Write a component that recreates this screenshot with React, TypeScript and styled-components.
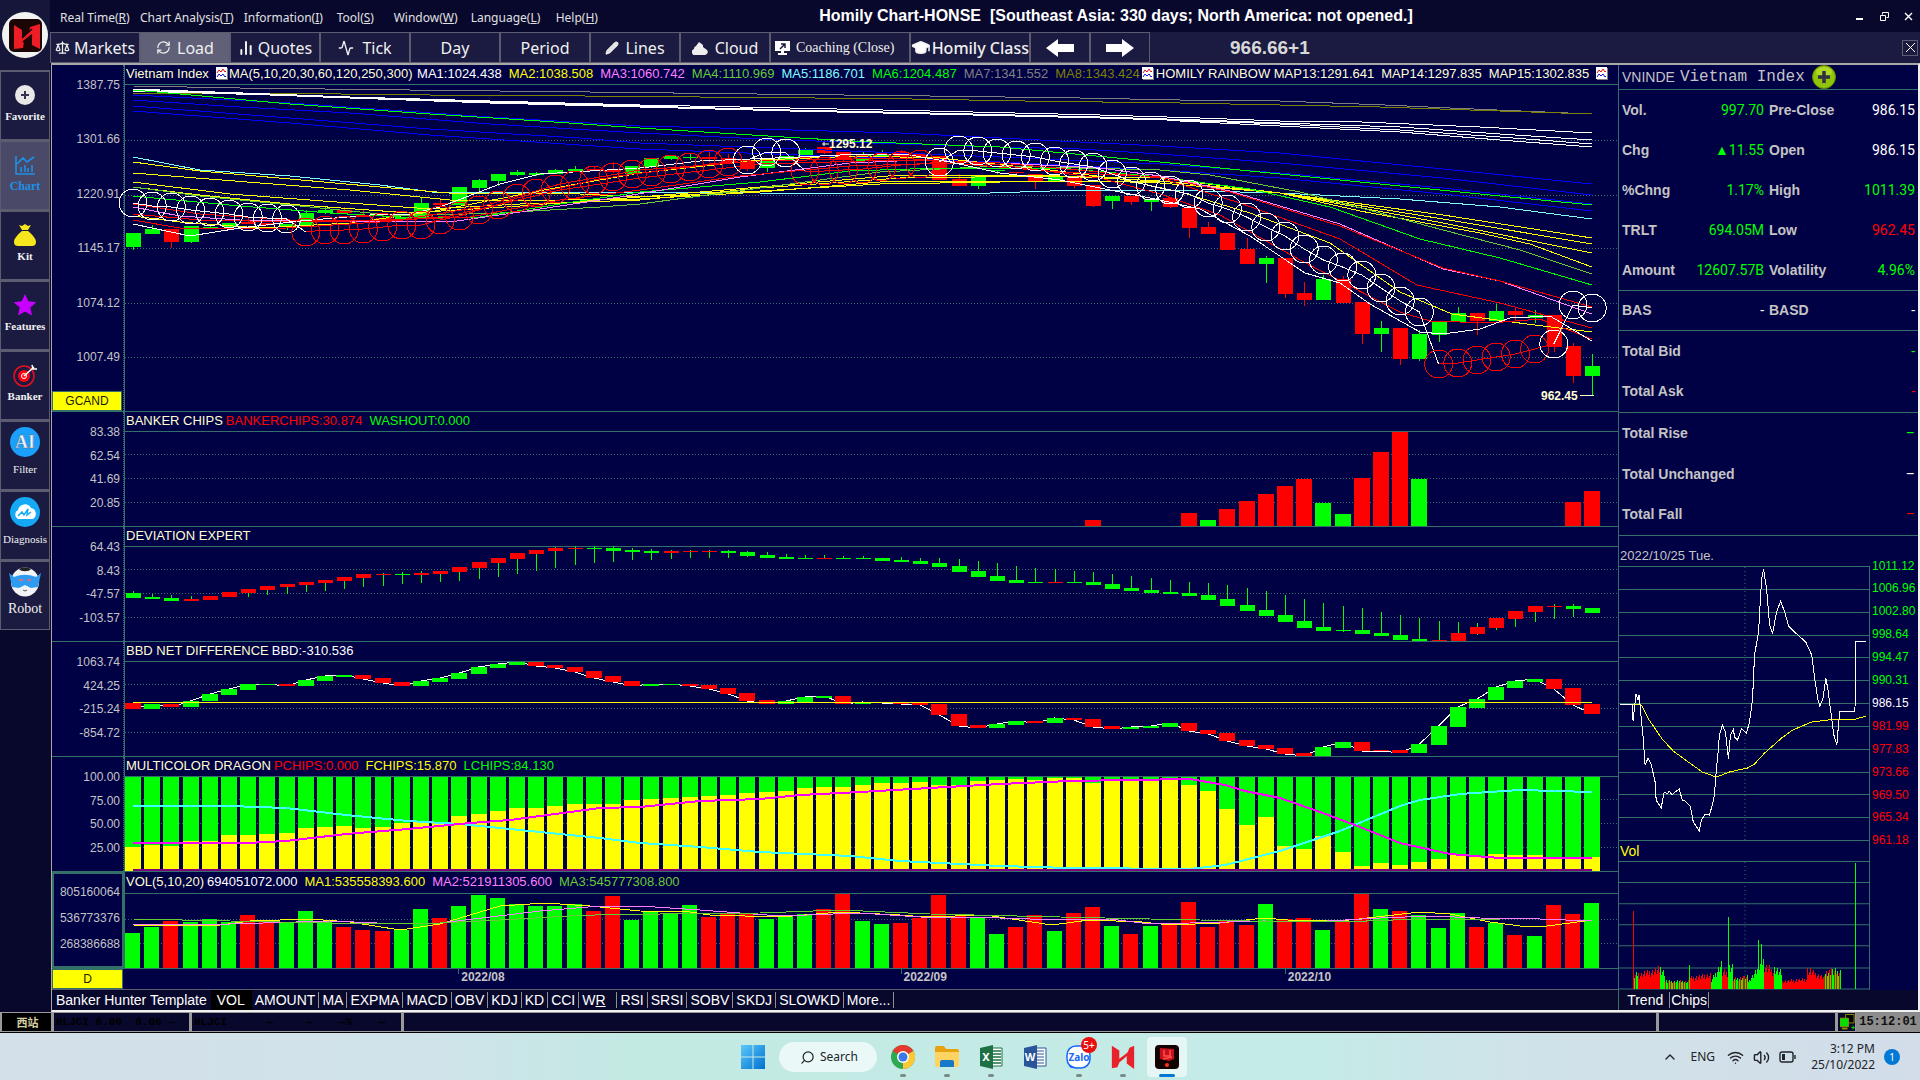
import React from "react";
import styled, { createGlobalStyle, css } from "styled-components";
import { Scale, RefreshCw, Activity, Pencil, GraduationCap, Wifi, Volume2, ChevronUp, Search as SearchIcon, ChartNoAxesColumn } from "lucide-react";

const C = {
  navy: "#000045",
  ink: "#08082d",
  bar: "#1b1b41",
  edge: "#5c5c70",
  teal: "#34706a",
  green: "#00ff00",
  red: "#ff0000",
  yellow: "#ffff00",
  text: "#c4c4c4",
  cream: "#ffffd0",
  pink: "#ff80ff",
  cyan: "#80ffff",
  olive: "#808000",
  leaf: "#66cc33",
  grey: "#808080",
  blue: "#0000ff",
  white: "#ffffff",
};

const Global = createGlobalStyle`
  *, *::before, *::after { box-sizing: border-box; }
  body { margin: 0; background: ${C.ink}; font-family: "Liberation Sans", Arial, sans-serif; }
  button { font: inherit; color: inherit; background: none; border: 0; padding: 0; margin: 0; cursor: pointer; }
`;

/* ---------- frame ---------- */

const Screen = styled.div`
  display: flex;
  flex-direction: column;
  min-height: 100vh;
  overflow: hidden;
`;
const Body = styled.div`
  flex: 1;
  display: flex;
`;
const Rail = styled.nav`
  width: 50px;
  flex: none;
  display: flex;
  flex-direction: column;
  background: ${C.ink};
`;
const LogoBox = styled.div`
  height: 70px;
  display: grid;
  place-items: center;
  background: #16163a;
`;
const RailButton = styled.button<{ $on?: boolean; $size?: number; $bold?: boolean; $large?: boolean }>`
  height: 70px;
  width: 50px;
  border: 1px solid ${C.edge};
  border-top-width: 2px;
  background: ${(p) => (p.$on ? "#4a4a68" : C.bar)};
  color: ${(p) => (p.$on ? "#1e90e6" : "#f0f0f0")};
  font-family: "Liberation Serif", serif;
  font-size: ${(p) => p.$size ?? 11}px;
  font-weight: ${(p) => (p.$bold ? 700 : 400)};
  line-height: 16px;
  display: flex;
  flex-direction: column;
  align-items: center;
  justify-content: center;
  gap: ${(p) => (p.$large ? 4 : 1)}px;
  padding-bottom: ${(p) => (p.$large ? 8 : 4)}px;
  white-space: nowrap;
`;
const Window = styled.div`
  flex: 1;
  min-width: 0;
  display: flex;
  flex-direction: column;
`;
const TitleRow = styled.header`
  height: 32px;
  display: flex;
  align-items: center;
  background: ${C.ink};
  color: #e0e0e0;
`;
const MenuBar = styled.div`
  flex: 1 1 268px;
  display: flex;
  gap: 10px;
  padding: 3px 0 0 10px;
  font: 12px/16px "Noto Sans", sans-serif;
`;
const MenuButton = styled.button<{ $w: number }>`
  min-width: ${(p) => p.$w}px;
  text-align: left;
  white-space: nowrap;
`;
const Title = styled.h1`
  margin: 0;
  font-size: 16px;
  line-height: 20px;
  color: #fff;
  white-space: pre;
`;
const WindowButtons = styled.div`
  flex: 1 1 0;
  display: flex;
  justify-content: flex-end;
  gap: 12px;
  padding-right: 6px;
`;
const SmallButton = styled.button<{ $boxed?: boolean }>`
  width: ${(p) => (p.$boxed ? 16 : 12)}px;
  height: 16px;
  display: grid;
  place-items: center;
  ${(p) => p.$boxed && css`border: 1px solid ${C.edge};`}
`;
const ToolRow = styled.div`
  height: 31px;
  display: flex;
  align-items: center;
  background: ${C.bar};
  color: #f0f0f0;
  padding-right: 2px;
`;
const ToolButton = styled.button<{ $w: number; $on?: boolean; $gap?: number; $font?: string; $left?: boolean }>`
  width: ${(p) => p.$w}px;
  height: 31px;
  border: 1px solid ${C.edge};
  background: ${(p) => (p.$on ? "#606078" : C.bar)};
  font: ${(p) => p.$font ?? '16px/20px "Noto Sans", sans-serif'};
  display: flex;
  align-items: center;
  justify-content: ${(p) => (p.$left ? "flex-start" : "center")};
  padding-left: ${(p) => (p.$left ? 4 : 0)}px;
  gap: ${(p) => p.$gap ?? 4}px;
  white-space: nowrap;
`;
const Quote = styled.output`
  margin-left: 80px;
  flex: 1;
  font-weight: 700;
  font-size: 19px;
  color: #d8d8d8;
`;
const Work = styled.div`
  flex: 1;
  display: flex;
  margin-left: 1px;
  border: 2px solid #f0f0f0;
  border-left: 1px solid #a8a8a8;
  border-top-color: #a8a8a8;
  background: ${C.navy};
`;
const Charts = styled.main`
  flex: 1;
  min-width: 0;
  display: flex;
  flex-direction: column;
`;

/* ---------- chart panels ---------- */

const Panel = styled.section<{ $h: number; $grow?: boolean }>`
  display: grid;
  grid-template-columns: 72px minmax(0, 1fr);
  height: ${(p) => p.$h}px;
  ${(p) => p.$grow && css`flex: 1 0 auto;`}
  border-bottom: 1px solid ${C.teal};
`;
const Axis = styled.div<{ $pad: number; $boxed?: boolean }>`
  display: flex;
  flex-direction: column;
  padding: 12px 0 ${(p) => p.$pad}px;
  border-right: 1px dotted ${C.teal};
  ${(p) => p.$boxed && css`outline: 2px solid ${C.teal}; outline-offset: -2px;`}
`;
const Ticks = styled.div`
  flex: 1;
  display: flex;
  flex-direction: column;
  justify-content: space-between;
  text-align: right;
  padding-right: 3px;
  color: ${C.text};
  font-size: 12px;
  line-height: 16px;
`;
const YellowButton = styled.button`
  height: 20px;
  margin-right: 1px;
  background: ${C.yellow};
  border: 1px solid ${C.teal};
  color: #202000;
  font-size: 12px;
`;
const GapTick = styled.div`
  height: 26px;
`;
const Plot = styled.div`
  display: flex;
  flex-direction: column;
  min-width: 0;
  border-left: 1px solid ${C.teal};
`;
const Legend = styled.div<{ $tall?: boolean }>`
  height: ${(p) => (p.$tall ? 22 : 20)}px;
  display: flex;
  align-items: center;
  gap: 7px;
  padding: 0 0 2px 1px;
  border-bottom: 1px solid ${C.teal};
  font-size: 13px;
  line-height: 16px;
  white-space: nowrap;
  color: ${C.cream};
`;
const Tag = styled.span<{ $c?: string }>`
  color: ${(p) => p.$c ?? C.cream};
`;
const Pair = styled.span<{ $gap?: number }>`
  display: inline-flex;
  align-items: center;
  gap: ${(p) => p.$gap ?? 3}px;
`;
const Canvas = styled.svg`
  display: block;
  width: 100%;
  flex: 1;
  min-height: 0;
  overflow: visible;
`;
const DateRow = styled.div`
  display: grid;
  grid-template-columns: 72px minmax(0, 1fr);
  height: 21px;
  border-bottom: 1px solid ${C.edge};
`;
const Dates = styled.div`
  display: grid;
  grid-template-columns: 334fr 442fr 384fr 333fr;
  font-size: 12px;
  font-weight: 700;
  line-height: 17px;
  color: ${C.text};
`;
const DateMark = styled.span<{ $tick?: boolean }>`
  padding-left: 2px;
  height: 5px;
  ${(p) => p.$tick && css`border-left: 1px solid ${C.teal};`}
`;
const TabRow = styled.div`
  height: 20px;
  display: flex;
  align-items: center;
  background: ${C.ink};
  color: #fff;
  font-size: 14px;
  line-height: 16px;
  padding-left: 1px;
`;
const Tab = styled.button<{ $on?: boolean; $bare?: boolean; $pad?: number }>`
  padding: 0 ${(p) => p.$pad ?? 3}px;
  white-space: nowrap;
  border-right: 1px solid ${(p) => (p.$bare ? "transparent" : "#909090")};
  ${(p) => p.$on && css`background: #000; line-height: 20px;`}
`;

/* ---------- quote column ---------- */

const Aside = styled.aside`
  width: 300px;
  flex: none;
  border-left: 1px solid ${C.teal};
  display: flex;
  flex-direction: column;
`;
const SymbolRow = styled.div`
  height: 25px;
  display: flex;
  align-items: center;
  gap: 5px;
  padding-left: 3px;
  border-bottom: 1px solid ${C.teal};
  color: ${C.text};
  font-size: 14px;
`;
const SymbolName = styled.span`
  font: 16px/20px "Liberation Mono", monospace;
  white-space: nowrap;
`;
const Facts = styled.table`
  width: 100%;
  border-collapse: collapse;
  table-layout: fixed;
  tbody { border-bottom: 1px solid ${C.teal}; }
  th, td { padding: 0 3px; white-space: nowrap; }
  th { text-align: left; font-size: 14px; color: ${C.text}; padding-right: 0; }
  td + th { padding-left: 2px; }
`;
const FactRow = styled.tr<{ $h?: number }>`
  height: ${(p) => p.$h ?? 40}px;
`;
const Val = styled.td<{ $c: string }>`
  text-align: right;
  font-family: Roboto, sans-serif;
  font-size: 14px;
  color: ${(p) => p.$c};
`;
const Intraday = styled.div`
  flex: 1;
  display: grid;
  grid-template-columns: minmax(0, 1fr) 48px;
`;
const IntraCol = styled.div`
  display: flex;
  flex-direction: column;
`;
const Caption = styled.div<{ $h: number; $c?: string }>`
  height: ${(p) => p.$h}px;
  padding-left: 1px;
  display: flex;
  align-items: flex-end;
  font-size: ${(p) => (p.$c ? 14 : 13)}px;
  line-height: 20px;
  color: ${(p) => p.$c ?? C.text};
  border-right: 1px solid ${(p) => (p.$c ? C.teal : "transparent")};
`;
const IntraPrice = styled.svg`
  display: block;
  width: 100%;
  height: 275px;
`;
const IntraTicks = styled.div`
  height: 313px;
  padding: 22px 0 0 2px;
  display: flex;
  flex-direction: column;
  justify-content: space-between;
  font-size: 12px;
  line-height: 16px;
`;

/* ---------- bottom strips ---------- */

const Status = styled.footer`
  height: 21px;
  display: flex;
  background: ${C.ink};
  border-bottom: 1px solid #000;
  color: #000;
  font: 700 11px/18px "Liberation Mono", monospace;
`;
const Cell = styled.div<{ $w?: number; $bg?: string; $c?: string }>`
  ${(p) => (p.$w ? css`width: ${p.$w}px; flex: none;` : css`flex: 1;`)}
  border: 1px solid #9a9a9a;
  border-left-width: 2px;
  background: ${(p) => p.$bg ?? C.ink};
  padding-left: 2px;
  white-space: pre;
  ${(p) => p.$c && css`color: ${p.$c}; text-align: center; font-family: "Noto Sans CJK SC", sans-serif;`}
`;
const Clock = styled.time`
  width: 64px;
  flex: none;
  background: #8c8c8c;
  font: 700 12px/20px "Liberation Mono", monospace;
  text-align: center;
  color: #101010;
`;
const Taskbar = styled.div`
  height: 48px;
  display: flex;
  align-items: center;
  background: linear-gradient(90deg, #d3dfe9 0%, #d0e3ea 22%, #c3e9e3 33%, #c4ebe7 68%, #d0e2e9 80%, #d2dde9 100%);
  font: 12px/16px "Noto Sans", sans-serif;
  color: #202428;
`;
const Grow = styled.div`
  flex: 1 1 0;
  display: flex;
  justify-content: flex-end;
  align-items: center;
  gap: 9px;
  padding-right: 20px;
`;
const Dock = styled.div`
  display: flex;
  align-items: center;
  gap: 4px;
`;
const DockButton = styled.button<{ $on?: boolean; $dot?: boolean }>`
  width: 40px;
  height: 40px;
  border-radius: 4px;
  display: grid;
  place-items: center;
  position: relative;
  ${(p) => p.$on && css`background: #e6f6f5;`}
  ${(p) =>
    (p.$dot || p.$on) &&
    css`
      &::after {
        content: "";
        position: absolute;
        left: 50%;
        bottom: 0;
        width: ${p.$on ? 16 : 6}px;
        height: 3px;
        transform: translateX(-50%);
        border-radius: 2px;
        background: ${p.$on ? "#0078d4" : "#7c8a8c"};
      }
    `}
`;
const Badge = styled.span`
  position: absolute;
  top: 0;
  right: 2px;
  width: 16px;
  height: 16px;
  border-radius: 50%;
  background: #e81010;
  color: #fff;
  font-size: 10px;
  line-height: 16px;
`;
const SearchBox = styled.label`
  width: 98px;
  height: 30px;
  margin: 0 2px;
  border-radius: 15px;
  background: #eaf8f8;
  display: flex;
  align-items: center;
  gap: 5px;
  padding-left: 21px;
  svg { transform: scaleX(-1); }
  input {
    width: 50px;
    border: 0;
    padding: 0;
    background: transparent;
    font: inherit;
  }
  input::placeholder { color: #202428; opacity: 1; }
`;
const DateTime = styled.div`
  text-align: right;
  margin-left: 6px;
`;
const Count = styled.span`
  width: 16px;
  height: 16px;
  border-radius: 50%;
  background: #0078d4;
  color: #fff;
  text-align: center;
  font-size: 10px;
`;

/* ---------- series data ---------- */

const X0 = 133;
const STEP = 19.2;
const cx = (i: number) => X0 + STEP * i;
const hue = (k: string) => (k === "G" ? C.green : C.red);

type Box = { k: string; n: number[] };
const parse = (s: string): Box[] =>
  s.trim().split(/\s+/).map((t) => ({ k: t[0], n: t.slice(1).split(",").map(Number) }));

const CANDLES = parse(`
G233,247,233,250 G229,234,225,234 R229,242,229,248 G226,242,226,243 G227,228,226,229 G223,227,223,227 R222,224,217,224
R223,225,223,226 G224,226,224,230 G213,225,210,225 G210,213,207,214 R210,213,207,213 R215,217,210,217 R218,220,215,220
G217,219,217,220 G203,217,198,217 R203,205,198,207 G187,205,187,205 G180,188,179,192 G174,181,174,186 G172,175,170,176
G173,175,172,176 G170,174,169,174 G169,171,166,171 R169,171,167,171 R170,172,162,173 G166,174,166,174 G158,167,158,168
G156,159,155,160 G157,158,153,160 R157,159,152,162 R158,163,154,163 R160,169,160,171 G160,168,160,172 G156,161,156,161
G150,157,148,157 R147,153,147,154 R152,160,152,161 G155,161,152,161 G154,156,150,157 R152,157,150,157 R154,157,153,158
R156,180,156,180 R179,186,174,186 G175,186,175,189 G170,171,170,174 R172,173,172,175 R174,181,174,189 G177,181,177,181
R177,186,177,188 R185,206,185,207 G196,201,196,209 R196,202,196,205 G199,202,199,211 R198,207,198,208 R208,228,208,238
R227,234,222,234 R233,250,233,250 R249,264,238,264 G258,264,256,283 R258,294,258,298 R293,300,282,306 G279,300,275,300
R279,303,276,303 R302,334,302,344 G328,334,321,352 R328,359,328,365 G334,359,330,361 G321,335,321,342 G313,322,307,322
R313,321,313,335 G311,321,304,321 R311,315,308,320 G315,318,310,323 R315,347,315,352 R346,376,343,383 G366,376,354,396`);

const RINGS = parse(`
W203 W206 W207 W210 W212 W214 W217 W218 W219 R232 R230 R230 R229 R227 R225 R225 R220 R216 R210 R205 R198 R193 R189 R185
R180 R177 R174 R172 R169 R167 R164 R162 W160 W152 W153 R171 R171 R170 R169 R167 R165 R164 W162 W150 W151 W153 W155 W157
W161 W164 W167 W174 W181 W186 W190 W194 W203 W209 W217 W227 W236 W249 W260 W267 W275 W288 W301 W312 R364 R363 R360 R357
R354 R349 W344 W305 W308`);

const CHIPS: [number, string, number][] = [
  [50, "R", 520], [55, "R", 513], [56, "G", 520], [57, "R", 509], [58, "R", 501], [59, "R", 494], [60, "R", 486],
  [61, "R", 479], [62, "G", 503], [63, "G", 514], [64, "R", 478], [65, "R", 452], [66, "R", 432], [67, "G", 479],
  [75, "R", 502], [76, "R", 491],
];

const DEVIATION = parse(`
G593,598,591,598 G597,599,594,599 G598,601,595,601 R599,601,596,601 R596,600,596,600 R592,597,592,597 R589,593,589,597
R586,590,586,595 R584,587,584,594 R582,585,582,592 R580,583,580,591 R577,581,577,589 R574,578,574,587 R574,575,573,586
G574,575,572,584 R573,575,571,583 R571,574,571,582 R567,572,567,581 R562,568,562,579 R558,563,558,577 R553,559,553,574
R550,554,550,571 R548,551,547,568 R548,549,546,565 G548,549,546,563 G548,551,546,562 G550,552,548,560 G551,553,549,560
R551,553,550,559 R551,552,550,558 R551,552,550,558 G551,553,550,558 G552,556,551,557 G555,558,552,558 G557,559,554,559
G558,559,555,559 R558,559,555,559 G558,559,556,559 G558,559,556,559 G558,561,558,561 G560,562,557,562 G561,564,558,564
G563,567,558,567 G566,572,559,572 G571,577,561,577 G576,581,563,581 G580,583,566,583 G582,583,568,583 R582,583,569,583
G582,583,571,583 G582,585,572,585 G584,589,574,589 G588,591,576,591 G590,593,578,593 G592,594,580,594 G593,596,582,596
G595,600,583,600 G599,606,585,606 G605,611,588,611 G610,616,591,616 G615,622,595,622 G621,628,599,628 G627,631,603,631
G630,631,606,632 G630,634,608,634 G633,636,612,636 G635,640,615,640 G639,641,618,641 R640,641,621,641 R633,641,622,641
R627,634,623,635 R618,628,618,630 R611,619,611,627 R606,612,606,622 R606,607,604,619 G606,609,604,617 G608,613,608,613`);

const BBD = parse(`
R703,709 G704,709 R704,707 G701,707 G694,701 G689,695 G684,690 G684,685 R684,686 G680,686 G676,681 G675,677 R675,679
R678,683 R682,686 G681,686 G678,682 G673,679 G667,674 G664,668 G662,665 R662,666 R665,668 R667,672 R671,678 R676,682
R681,686 G684,686 G684,685 R684,686 R685,689 R688,694 R693,701 R700,704 G701,704 G697,702 G696,698 R696,704 G702,704
R702,703 R702,704 R703,705 R704,715 R714,726 R725,728 G724,728 G721,725 R721,723 G718,723 R718,720 R719,727 R726,729
G727,729 G726,728 G723,727 R723,731 R730,734 R733,741 R740,746 R745,749 R748,754 R753,756 G747,756 G742,748 R742,751
R750,751 R750,753 G744,753 G726,745 G707,727 G699,708 G687,700 G681,688 G679,682 R679,689 R688,705 R704,714`);

const DRAGON = [
  847, 845, 846, 841, 841, 835, 835, 834, 833, 828, 827, 826, 828, 827, 823, 822, 823, 816, 814, 811, 808, 808, 806, 804,
  804, 804, 800, 799, 798, 797, 796, 795, 793, 792, 791, 788, 787, 787, 785, 783, 783, 782, 785, 785, 781, 780, 779, 780,
  778, 778, 783, 780, 780, 779, 779, 785, 791, 809, 825, 817, 846, 849, 836, 852, 866, 863, 865, 862, 859, 855, 857, 854,
  855, 855, 859, 859, 857,
];

const VOLUME = parse(`
G932 G926 R920 G921 G918 G921 R914 R921 G921 G910 G920 R926 R929 R930 G929 G908 R917 G905 G894 G897 G903 G905 G905 G903
R910 R895 G919 G911 G912 G904 R916 R913 R913 G918 G914 G913 R908 R893 G920 G923 R922 R917 R894 R915 G916 G933 R926 R914
G930 R912 R906 G925 R933 G925 R924 R901 R926 R920 R924 G903 R918 R917 G929 R920 R893 G908 R910 G914 G927 G912 R926 G922
R934 G935 R904 R913 G902`);

const PRICE_LINES: [string, string][] = [
  [C.grey, "133,86 240,88 410,90 590,92 757,94 930,96 1080,98 1180,100 1280,101 1385,105 1450,108 1592,114"],
  [C.olive, "133,93 250,93 430,95 585,96 700,97 815,98 912,99 1025,101 1180,103 1280,105 1380,107 1440,109 1500,111 1592,114"],
  [C.blue, "133,95 290,103 490,117 640,126 720,128 900,133 1000,138 1160,146 1280,153 1443,169 1592,184"],
  [C.blue, "133,100 240,107 350,113 490,124 640,133 760,139 900,144 1000,147 1080,149 1160,154 1280,163 1443,178 1592,195"],
  [C.blue, "133,106 290,118 430,129 580,138 640,143 800,149 1000,157 1160,164 1280,173 1443,188 1592,204"],
  [C.blue, "133,111 290,123 430,135 520,141 640,149 800,155 1000,162 1160,170 1280,178 1443,194 1592,211"],
  [C.white, "133,89 270,94 350,97 490,101 640,105 790,108 930,111 1100,115 1200,118 1280,121 1362,122 1480,127 1592,133"],
  [C.white, "133,90 270,95 350,98 490,102 640,106 790,110 930,113 1100,117 1200,120 1280,123 1400,127 1500,134 1592,140"],
  [C.white, "133,91 270,95 350,98 490,103 640,107 790,111 930,114 1100,118 1200,121 1280,124 1400,130 1500,137 1592,144"],
  [C.white, "1180,121 1280,126 1400,132 1500,140 1592,147"],
  [C.green, "133,90 180,94 290,104 430,114 540,121 640,128 800,138 870,142 1000,147 1160,162 1280,174 1400,186 1500,196 1592,205"],
  [C.cyan, "133,157 200,170 290,176 380,185 440,193 560,192 760,193 870,194 990,193 1080,190 1160,190 1280,193 1400,199 1500,207 1592,219"],
  [C.yellow, "133,162 200,171 290,179 380,187 460,194 560,193 640,197 700,194 760,191 880,184 1000,182 1100,181 1160,183 1280,193 1443,215 1592,238"],
  [C.yellow, "133,173 260,183 350,190 450,200 560,200 640,199 760,192 880,182 1000,181 1160,181 1280,193 1443,219 1592,244"],
  [C.yellow, "133,182 230,194 350,203 430,209 520,204 640,200 760,188 900,178 1050,176 1160,178 1280,193 1443,223 1592,253"],
  [C.yellow, "133,187 200,195 300,205 410,213 520,206 640,197 760,187 900,175 1060,176 1160,181 1280,193 1360,211 1480,233 1530,244 1592,267"],
  [C.yellow, "133,216 180,222 260,228 350,223 430,212 560,187 640,173 760,160 860,156 940,158 1050,170 1120,179 1180,192 1250,213 1330,243 1400,292 1452,314 1527,324 1592,332"],
  [C.leaf, "133,187 200,196 300,206 400,216 500,213 600,207 640,204 760,188 880,172 1000,166 1160,170 1210,175 1300,192 1365,209 1443,230 1520,250 1592,274"],
  [C.green, "133,196 240,206 330,213 400,217 480,217 560,204 640,192 760,182 850,171 940,168 1060,168 1160,177 1250,189 1330,207 1420,239 1500,258 1592,285"],
  [C.pink, "133,207 180,216 240,220 350,221 450,222 520,212 620,197 740,177 850,163 920,160 1000,163 1100,168 1160,176 1230,191 1340,224 1443,269 1500,281 1592,314"],
  [C.red, "133,204 200,214 290,220 390,220 470,217 560,200 640,190 740,176 850,166 950,163 1060,172 1160,177 1230,192 1340,226 1443,268 1500,281 1592,307"],
  [C.red, "133,220 180,228 270,229 380,222 450,216 560,190 640,178 760,164 900,160 1000,163 1100,172 1160,178 1240,203 1340,239 1417,285 1500,303 1592,328"],
  [C.red, "133,214 200,220 300,222 400,220 480,207 560,184 640,170 760,161 900,158 1000,165 1100,178 1160,194 1220,215 1300,260 1400,312 1430,321 1490,323 1540,319 1592,339"],
  [C.white, "133,224 190,236 240,228 300,221 370,215 410,214 440,207 500,184 540,174 590,171 640,168 700,161 750,159 800,157 860,154 910,155 950,162 1000,173 1060,180 1100,188 1160,200 1200,209 1250,236 1305,273 1340,283 1370,304 1420,332 1443,334 1480,329 1510,318 1550,316 1592,341"],
];

const VOL_LINES: [string, string][] = [
  [C.yellow, "133,924 213,925 250,920 310,918 350,921 400,929 440,923 500,905 545,902 590,905 640,910 690,911 710,914 780,916 840,911 900,914 925,916 985,914 1052,924 1089,919 1142,921 1170,924 1220,922 1264,917 1300,920 1350,919 1420,911 1450,913 1490,921 1520,925 1540,926 1592,919"],
  [C.pink, "133,923 230,923 330,920 400,923 440,922 540,910 600,905 640,905 700,909 780,915 860,912 920,916 1000,917 1060,919 1110,918 1150,923 1190,922 1264,920 1310,921 1380,917 1430,915 1480,917 1540,918 1592,920"],
  [C.leaf, "133,918 230,920 330,922 420,923 500,919 570,915 620,913 660,913 760,912 840,909 930,913 1060,916 1150,918 1250,920 1340,921 1420,918 1500,919 1592,919"],
];

const MAGENTA = "133,843 247,843 286,841 346,834 408,829 470,823 510,820 555,814 600,808 640,807 700,801 760,799 800,795 860,792 912,789 1000,784 1070,781 1130,780 1190,779 1225,785 1245,791 1280,798 1320,812 1355,825 1400,843 1450,854 1500,858 1592,858";
const AQUA = "133,806 230,806 286,808 346,815 408,821 460,824 510,829 560,834 600,838 640,843 700,847 760,852 850,856 900,861 1000,866 1070,868 1190,869 1225,865 1280,851 1340,831 1400,806 1420,800 1460,794 1520,790 1592,792";

const DAY_PRICE = "1620,702 1632,702 1633,719 1636,692 1638,698 1639,693 1641,715 1643,735 1645,763 1648,756 1651,762 1655,780 1656,798 1661,806 1664,790 1667,792 1669,789 1672,793 1675,790 1679,787 1682,798 1685,799 1690,804 1693,820 1699,829 1701,818 1705,812 1709,813 1712,803 1714,793 1716,767 1718,747 1719,733 1722,723 1725,730 1728,757 1730,733 1733,727 1734,735 1737,738 1741,727 1746,731 1749,720 1752,697 1754,653 1758,630 1761,577 1763,567 1766,587 1769,623 1772,631 1776,610 1780,599 1784,610 1788,624 1796,632 1805,640 1811,653 1814,677 1817,697 1819,704 1822,697 1825,676 1827,687 1830,710 1833,733 1836,743 1837,730 1839,709 1854,709 1855,639 1865,639";
const DAY_AVG = "1620,702 1640,702 1642,704 1649,718 1662,737 1673,749 1688,760 1702,770 1713,774 1719,774 1729,770 1747,766 1754,762 1764,751 1772,744 1781,736 1792,728 1811,720 1827,718 1855,717 1865,714";

/* [start, end, colour key (M = mixed), height at start, height at end] */
const DAY_VOLUME: [number, number, string, number, number][] = [
  [1634, 1639, "M", 11, 13], [1639, 1660, "R", 12, 17], [1660, 1665, "G", 18, 13], [1665, 1690, "M", 6, 6],
  [1690, 1711, "R", 9, 12], [1711, 1722, "G", 7, 23], [1722, 1728, "R", 14, 14], [1728, 1733, "G", 19, 19],
  [1733, 1747, "M", 8, 10], [1747, 1763, "G", 6, 25], [1763, 1773, "R", 19, 15], [1773, 1781, "G", 17, 13],
  [1781, 1806, "R", 6, 8], [1806, 1824, "R", 16, 9], [1824, 1840, "M", 15, 15],
];
const dayBars = DAY_VOLUME.flatMap(([a, b, k, h0, h1]) =>
  Array.from({ length: b - a }, (_, n) => {
    const x = a + n;
    const wob = ((x * 37) % 11) / 10 - 0.4;
    const h = (h0 + ((h1 - h0) * n) / (b - a)) * (1 + wob * 0.55);
    return { x, h: Math.round(h), c: k === "M" ? ((x * 7) % 5 < 2 ? C.red : C.green) : hue(k) };
  })
);

/* ---------- drawing helpers ---------- */

const Grid = ({ ys, x1 = 125, x2 = 1618 }: { ys: number[]; x1?: number; x2?: number }) => (
  <g stroke={C.teal} strokeDasharray="1 2">
    {ys.map((y) => (
      <line key={y} x1={x1} x2={x2} y1={y + 0.5} y2={y + 0.5} />
    ))}
  </g>
);
const Poly = ({ p, c, w = 1 }: { p: string; c: string; w?: number }) => (
  <polyline points={p} fill="none" stroke={c} strokeWidth={w} shapeRendering="crispEdges" />
);
const Sticks = ({ data, wick }: { data: Box[]; wick?: string }) => (
  <g shapeRendering="crispEdges">
    {data.map(({ k, n }, i) => (
      <g key={i} fill={hue(k)}>
        <rect x={Math.round(cx(i))} y={n[2]} width={1} height={n[3] - n[2]} fill={wick ?? hue(k)} />
        <rect x={Math.round(cx(i)) - 7} y={n[0]} width={15} height={n[1] - n[0]} />
      </g>
    ))}
  </g>
);

const PageIcon = () => (
  <svg width="12" height="13" viewBox="0 0 12 13" aria-hidden="true">
    <path d="M0 0h11v12H0z" fill="#fff" />
    <path d="M11 1h1v12H1v-1h10z" fill="#808080" />
    <path d="M1 6l2-3 2 2 2-3 2 3 1-1" fill="none" stroke="#e01010" />
    <path d="M1 10l2-3 2 2 2-2 2 3 1-1" fill="none" stroke="#1010d0" />
  </svg>
);
const Mark = ({ s, c = "#e8222a" }: { s: number; c?: string }) => (
  <svg width={s} height={s} viewBox="0 0 28 28" aria-hidden="true">
    <path d="M2 2l8 5v9l7-5v3l-7 6-2 5-6 1z" fill={c} />
    <path d="M26 2v25l-8-6v-8l-7 5v-2l8-7 2-5z" fill={c} />
  </svg>
);

const Logo = () => (
  <svg width="48" height="48" viewBox="0 0 48 48" aria-label="Homily">
    <circle cx="24" cy="24" r="23" fill="#f2f2f2" />
    <rect x="8" y="8" width="33" height="33" rx="5" fill="#1c0505" />
    <path d="M13 14l8 5v8l7-6 1-5 10-3v25l-8-4v-9l-8 6-1 6-9 1z" fill="#ee1c25" />
    <path d="M21 27l10-9M22 31l9-7" stroke="#1c0505" strokeWidth="1.6" />
  </svg>
);

const RailIcon = ({ name }: { name: string }) => {
  switch (name) {
    case "Favorite":
      return <svg width="24" height="24" viewBox="0 0 24 24"><circle cx="12" cy="12" r="10" fill="#e8e8e8" /><path d="M12 8v8M8 12h8" stroke="#33334f" strokeWidth="2" /></svg>;
    case "Chart":
      return <svg width="24" height="24" viewBox="0 0 24 24" fill="none" stroke="#1e90e6" strokeWidth="1.6"><path d="M3 3v18h19M4 11l6-6 4 4 7-5M8 19v-5M12 19v-7M15 19v-4M19 19v-7" /></svg>;
    case "Kit":
      return <svg width="24" height="24" viewBox="0 0 24 24" fill="#f5e61e"><path d="M6 2l3 1 3-2 3 2 3-1-3 5H9zM9 8h6c5 4 8 8 8 11 0 3-2 4-4 4H5c-2 0-4-1-4-4 0-3 3-7 8-11z" /></svg>;
    case "Features":
      return <svg width="24" height="24" viewBox="0 0 24 24" fill="#c800ff"><path d="M12 1l3.300 7.300 8 .9-6 5.400 1.700 7.900-7-4-7 4 1.700-7.900-6-5.400 8-.9z" /></svg>;
    case "Banker":
      return <svg width="26" height="24" viewBox="0 0 26 24" fill="none"><circle cx="12" cy="13" r="10" stroke="#e01020" strokeWidth="1.600" /><circle cx="12" cy="13" r="6" fill="#ff0010" /><circle cx="12" cy="13" r="2.500" stroke="#fff" /><path d="M12 13L22 4M20 2l1 4 4 0" stroke="#fff" strokeWidth="1.500" /></svg>;
    case "Filter":
      return <svg width="30" height="30" viewBox="0 0 30 30"><circle cx="15" cy="15" r="15" fill="#1aa0fa" /><text x="15" y="21" textAnchor="middle" fontFamily="Liberation Serif, serif" fontWeight="700" fontSize="18" fill="#f4f4f8" stroke="#5a6a80" strokeWidth=".4">AI</text></svg>;
    case "Diagnosis":
      return <svg width="30" height="30" viewBox="0 0 30 30"><circle cx="15" cy="15" r="15" fill="#14a8f5" /><path d="M8 22a5 5 0 0 1 0-9 7 7 0 0 1 13-2 6 6 0 0 1 2 11z" fill="#fff" /><path d="M8 19l4-4 2 3 4-6-1 6 4-3" fill="none" stroke="#14a8f5" strokeWidth="1.500" /></svg>;
    default:
      return <svg width="34" height="30" viewBox="0 0 34 30"><ellipse cx="17" cy="15" rx="14" ry="14.500" fill="#f4f4f6" /><path d="M11 2c3-2 9-2 12 0-2 3-10 3-12 0z" fill="#222" /><path d="M1 6l5 4c8-3 14-3 22 0l5-4-3 14-7 1-6-3-6 3-7-1z" fill="#2d9cf0" /><path d="M11 13h4M19 13h4" stroke="#d07080" strokeWidth="2" /><path d="M15 23l2 1 2-1" stroke="#555" fill="none" /></svg>;
  }
};

/* ---------- app ---------- */

const MENU: [string, string, number][] = [
  ["Real Time", "R", 70], ["Chart Analysis", "T", 92], ["Information", "I", 83], ["Tool", "S", 47],
  ["Window", "W", 67], ["Language", "L", 75], ["Help", "H", 42],
];
const RAIL: [string, number, boolean][] = [
  ["Favorite", 11, true], ["Chart", 12, true], ["Kit", 11, true], ["Features", 11, true],
  ["Banker", 11, true], ["Filter", 11, false], ["Diagnosis", 11, false], ["Robot", 14, false],
];
const LEGEND_MA: [string, string][] = [
  ["MA2:1038.508", C.yellow], ["MA3:1060.742", C.pink], ["MA4:1110.969", C.leaf],
  ["MA5:1186.701", C.cyan], ["MA6:1204.487", C.green], ["MA7:1341.552", C.grey],
];
const G = C.green, R = C.red, W = C.white;
const FACTS: [string, string, string, string, string, string][] = [
  ["Vol.", "997.70", G, "Pre-Close", "986.15", W],
  ["Chg", "▲11.55", G, "Open", "986.15", W],
  ["%Chng", "1.17%", G, "High", "1011.39", G],
  ["TRLT", "694.05M", G, "Low", "962.45", R],
  ["Amount", "12607.57B", G, "Volatility", "4.96%", G],
];
const TOTALS: [string, string, string][][] = [
  [["Total Bid", "-", G], ["Total Ask", "-", R]],
  [["Total Rise", "–", G], ["Total Unchanged", "–", W], ["Total Fall", "–", R]],
];
const DAY_TICKS = ["1011.12", "1006.96", "1002.80", "998.64", "994.47", "990.31", "986.15", "981.99", "977.83", "973.66", "969.50", "965.34", "961.18"];
const TABS = ["AMOUNT", "MA", "EXPMA", "MACD", "OBV", "KDJ", "KD", "CCI"];

const Scaled = ({ pad, labels, boxed, children }: { pad: number; labels: string[]; boxed?: boolean; children?: React.ReactNode }) => (
  <Axis $pad={pad} $boxed={boxed}>
    <Ticks>{labels.map((t) => <span key={t}>{t}</span>)}</Ticks>
    {children}
  </Axis>
);

export default function App() {
  const bbdLine = BBD.map(({ k, n }, i) => `${cx(i)},${k === "G" ? n[0] : n[1]}`).join(" ");
  return (
    <Screen>
      <Global />
      <Body>
        <Rail>
          <LogoBox><Logo /></LogoBox>
          {RAIL.map(([name, size, bold]) => (
            <RailButton key={name} $size={size} $bold={bold} $large={!bold} $on={name === "Chart"}>
              <RailIcon name={name} />
              {name}
            </RailButton>
          ))}
        </Rail>
        <Window>
          <TitleRow>
            <MenuBar>
              {MENU.map(([t, k, w]) => (
                <MenuButton key={t} $w={w}>{t}(<u>{k}</u>)</MenuButton>
              ))}
            </MenuBar>
            <Title>{"Homily Chart-HONSE  [Southeast Asia: 330 days; North America: not opened.]"}</Title>
            <WindowButtons>
              <SmallButton aria-label="Minimize"><svg width="8" height="8"><path d="M0 7h7" stroke="#fff" strokeWidth="2" /></svg></SmallButton>
              <SmallButton aria-label="Restore"><svg width="9" height="9" fill="none" stroke="#fff"><path d="M2.500 2.500v-2h6v5h-2M.5 3.500h5v5h-5z" /></svg></SmallButton>
              <SmallButton aria-label="Close"><svg width="9" height="9" stroke="#fff" strokeWidth="1.400"><path d="M1 1l7 7M8 1l-7 7" /></svg></SmallButton>
            </WindowButtons>
          </TitleRow>
          <ToolRow>
            <ToolButton $w={90}><Scale size={15} />Markets</ToolButton>
            <ToolButton $w={90} $on $gap={6}><RefreshCw size={15} />Load</ToolButton>
            <ToolButton $w={90}><ChartNoAxesColumn size={16} strokeWidth={3} />Quotes</ToolButton>
            <ToolButton $w={90} $gap={8}><Activity size={16} />Tick</ToolButton>
            <ToolButton $w={90}>Day</ToolButton>
            <ToolButton $w={90}>Period</ToolButton>
            <ToolButton $w={90} $gap={6}><Pencil size={14} fill="#ddd" />Lines</ToolButton>
            <ToolButton $w={90} $gap={7}>
              <svg width="16" height="14" viewBox="0 0 16 14" fill="#eee"><path d="M2 8a3 3 0 0 1 2-3l3-4 4 3v2l4 3a3 3 0 0 1-2 5H4a3 3 0 0 1-2-6z" /></svg>Cloud
            </ToolButton>
            <ToolButton $w={140} $gap={6} $left $font={'14px/20px "Liberation Serif", serif'}>
              <svg width="15" height="14" viewBox="0 0 15 14"><path d="M0 0h15v10H9v2h3v2H3v-2h3v-2H0z" fill="#fff" /><path d="M5 8l5-5M6 3h4v4" stroke="#1b1b41" strokeWidth="1.500" fill="none" /></svg>
              Coaching (Close)
            </ToolButton>
            <ToolButton $w={120} $gap={1} $font={'500 16px/20px "Noto Sans", sans-serif'}>
              <GraduationCap size={21} fill="#fff" />Homily Class
            </ToolButton>
            <ToolButton $w={60} aria-label="Back"><svg width="28" height="18" viewBox="0 0 28 18" fill="#fff"><path d="M0 9L12 0v5h16v8H12v5z" /></svg></ToolButton>
            <ToolButton $w={60} aria-label="Forward"><svg width="28" height="18" viewBox="0 0 28 18" fill="#fff"><path d="M28 9L16 0v5H0v8h16v5z" /></svg></ToolButton>
            <Quote>966.66+1</Quote>
            <SmallButton $boxed aria-label="Close chart"><svg width="11" height="11" stroke="#fff"><path d="M1 1l9 9M10 1l-9 9" /></svg></SmallButton>
          </ToolRow>
          <Work>
            <Charts>
              <Panel $h={346} $grow>
                <Scaled pad={0} labels={["1387.75", "1301.66", "1220.91", "1145.17", "1074.12", "1007.49"]}>
                  <GapTick />
                  <YellowButton>GCAND</YellowButton>
                </Scaled>
                <Plot>
                  <Legend>
                    <Tag>Vietnam Index</Tag>
                    <Pair $gap={1}><PageIcon />MA(5,10,20,30,60,120,250,300)&nbsp;<Tag $c={W}>MA1:1024.438</Tag></Pair>
                    {LEGEND_MA.map(([t, c]) => <Tag key={t} $c={c}>{t}</Tag>)}
                    <Pair $gap={2}><Tag $c={C.olive}>MA8:1343.424</Tag><PageIcon />HOMILY RAINBOW MAP13:1291.641</Pair>
                    <Tag>MAP14:1297.835</Tag>
                    <Tag>MAP15:1302.835</Tag>
                    <PageIcon />
                  </Legend>
                  <Canvas viewBox="125 85 1493 326" preserveAspectRatio="none" height="325">
                    <Grid ys={[140, 195, 248, 303, 357]} />
                    <Sticks data={CANDLES} />
                    {PRICE_LINES.map(([c, p], i) => <Poly key={i} c={c} p={p} />)}
                    {RINGS.slice(1).map(({ n }, i) => (
                      <line key={i} x1={cx(i)} y1={RINGS[i].n[0]} x2={cx(i + 1)} y2={n[0]} stroke={RINGS[i].k === "W" ? W : R} shapeRendering="crispEdges" />
                    ))}
                    {RINGS.map(({ k, n }, i) => (
                      <circle key={i} cx={cx(i)} cy={n[0]} r={14} fill="none" stroke={k === "W" ? W : R} shapeRendering="crispEdges" />
                    ))}
                    <g fontSize="12" fontWeight="700" fill={C.cream} stroke="none">
                      <text x="829" y="148">1295.12</text>
                      <path d="M822 144h7M824 142v4" stroke={C.cream} />
                      <text x="1541" y="400">962.45</text>
                      <path d="M1580 395.500h14" stroke={C.cream} />
                    </g>
                  </Canvas>
                </Plot>
              </Panel>

              <Panel $h={115}>
                <Scaled pad={15} labels={["83.38", "62.54", "41.69", "20.85"]} />
                <Plot>
                  <Legend><Pair><Tag>BANKER CHIPS</Tag><Tag $c={R}>BANKERCHIPS:30.874</Tag></Pair><Tag $c={G}>WASHOUT:0.000</Tag></Legend>
                  <Canvas viewBox="125 432 1493 94" preserveAspectRatio="none" height="94">
                    <Grid ys={[454, 478, 502]} />
                    {CHIPS.map(([i, k, y]) => <rect key={i} x={Math.round(cx(i)) - 8} y={y} width={16} height={526 - y} fill={hue(k)} />)}
                  </Canvas>
                </Plot>
              </Panel>

              <Panel $h={115}>
                <Scaled pad={15} labels={["64.43", "8.43", "-47.57", "-103.57"]} />
                <Plot>
                  <Legend>DEVIATION EXPERT</Legend>
                  <Canvas viewBox="125 547 1493 94" preserveAspectRatio="none" height="94">
                    <Grid ys={[569, 593, 617]} />
                    <Sticks data={DEVIATION} wick={G} />
                  </Canvas>
                </Plot>
              </Panel>

              <Panel $h={115}>
                <Scaled pad={15} labels={["1063.74", "424.25", "-215.24", "-854.72"]} />
                <Plot>
                  <Legend><Pair><Tag>BBD NET DIFFERENCE</Tag><Tag $c={W}>BBD:-310.536</Tag></Pair></Legend>
                  <Canvas viewBox="125 662 1493 94" preserveAspectRatio="none" height="94">
                    <Grid ys={[684, 708, 732]} />
                    <Poly p={bbdLine} c={W} />
                    {BBD.map(({ k, n }, i) => <rect key={i} x={Math.round(cx(i)) - 8} y={n[0]} width={16} height={n[1] - n[0]} fill={hue(k)} />)}
                    <line x1="133" x2="1592" y1="702.500" y2="702.500" stroke={C.yellow} />
                  </Canvas>
                </Plot>
              </Panel>

              <Panel $h={115}>
                <Scaled pad={15} labels={["100.00", "75.00", "50.00", "25.00"]} />
                <Plot>
                  <Legend><Pair><Tag>MULTICOLOR DRAGON</Tag><Tag $c={R}>PCHIPS:0.000</Tag></Pair><Tag $c={C.yellow}>FCHIPS:15.870</Tag><Tag $c={G}>LCHIPS:84.130</Tag></Legend>
                  <Canvas viewBox="125 777 1493 94" preserveAspectRatio="none" height="94">
                    <Grid ys={[799, 823, 847]} />
                    {DRAGON.map((y, i) => (
                      <g key={i}>
                        <rect x={Math.round(cx(i)) - 8} y={777} width={16} height={y - 777} fill={G} />
                        <rect x={Math.round(cx(i)) - 8} y={y} width={16} height={871 - y} fill={C.yellow} />
                      </g>
                    ))}
                    <Poly p={AQUA} c="#40ffff" w={2} />
                    <Poly p={MAGENTA} c="#ff00ff" w={2} />
                    <Poly p="133,870 1592,870" c="#800080" w={2} />
                  </Canvas>
                </Plot>
              </Panel>

              <Panel $h={97}>
                <Scaled pad={16} boxed labels={["805160064", "536773376", "268386688"]} />
                <Plot>
                  <Legend $tall><Pair><Tag>VOL(5,10,20)</Tag><Tag $c={W}>694051072.000</Tag></Pair><Tag $c={C.yellow}>MA1:535558393.600</Tag><Tag $c={C.pink}>MA2:521911305.600</Tag><Tag $c={C.leaf}>MA3:545777308.800</Tag></Legend>
                  <Canvas viewBox="125 893 1493 74" preserveAspectRatio="none" height="74">
                    <Grid ys={[918, 942]} />
                    {VOLUME.map(({ k, n }, i) => <rect key={i} x={Math.round(cx(i)) - 8} y={n[0]} width={15} height={967 - n[0]} fill={hue(k)} />)}
                    {VOL_LINES.map(([c, p]) => <Poly key={c} c={c} p={p} />)}
                  </Canvas>
                </Plot>
              </Panel>

              <DateRow>
                <YellowButton>D</YellowButton>
                <Dates>
                  <DateMark />
                  <DateMark $tick>2022/08</DateMark>
                  <DateMark $tick>2022/09</DateMark>
                  <DateMark $tick>2022/10</DateMark>
                </Dates>
              </DateRow>
              <TabRow>
                <Tab $bare>Banker Hunter Template</Tab>
                <Tab $bare $on $pad={6}>VOL</Tab>
                {TABS.map((t) => <Tab key={t}>{t}</Tab>)}
                <Tab>W<u>R</u>&nbsp;&nbsp;</Tab>
                {["RSI", "SRSI", "SOBV", "SKDJ", "SLOWKD", "More..."].map((t) => <Tab key={t}>{t}</Tab>)}
              </TabRow>
            </Charts>

            <Aside>
              <SymbolRow>
                VNINDE
                <SymbolName>Vietnam Index</SymbolName>
                <svg width="26" height="24" viewBox="0 0 26 24"><circle cx="14" cy="12" r="11.500" fill="#8fc40a" stroke="#5d8a00" /><ellipse cx="14" cy="7" rx="8" ry="5" fill="#c4e838" opacity=".6" /><path d="M14 6v12M8 12h12" stroke="#303040" strokeWidth="3.500" /></svg>
              </SymbolRow>
              <Facts>
                <colgroup><col width="62" /><col width="86" /><col width="72" /><col width="79" /></colgroup>
                <tbody>
                  {FACTS.map(([a, b, c, d, e, f]) => (
                    <FactRow key={a}><th scope="row">{a}</th><Val $c={c}>{b}</Val><th scope="row">{d}</th><Val $c={f}>{e}</Val></FactRow>
                  ))}
                </tbody>
                <tbody>
                  <FactRow><th scope="row">BAS</th><Val $c={W}>-</Val><th scope="row">BASD</th><Val $c={W}>-</Val></FactRow>
                </tbody>
                {TOTALS.map((rows, i) => (
                  <tbody key={i}>
                    {rows.map(([a, b, c]) => (
                      <FactRow key={a} $h={41}><th scope="row" colSpan={3}>{a}</th><Val $c={c}>{b}</Val></FactRow>
                    ))}
                  </tbody>
                ))}
              </Facts>
              <Intraday>
                <IntraCol>
                  <Caption $h={30}>2022/10/25 Tue.</Caption>
                  <IntraPrice viewBox="1619 564 250 275" preserveAspectRatio="none">
                    {DAY_TICKS.map((t, i) => {
                      const y = 564.5 + Math.round((i * 274) / 12);
                      return <line key={t} x1="1619" x2="1869" y1={y} y2={y} stroke={C.teal} />;
                    })}
                    <path d="M1868.500 564v275" stroke={C.teal} />
                    <line x1="1744.500" x2="1744.500" y1="565" y2="839" stroke={C.teal} strokeDasharray="1 3" />
                    <Poly p={DAY_AVG} c={C.yellow} />
                    <Poly p={DAY_PRICE} c={W} />
                  </IntraPrice>
                  <Caption $h={20} $c={C.yellow}>Vol</Caption>
                  <Canvas viewBox="1619 859 250 129" preserveAspectRatio="none" height="129">
                    {[859, 880, 901, 922, 943, 965, 986].map((y) => <line key={y} x1="1619" x2="1869" y1={y + 0.5} y2={y + 0.5} stroke={C.teal} />)}
                    <path d="M1868.500 859v128" stroke={C.teal} />
                    <line x1="1744.500" x2="1744.500" y1="860" y2="986" stroke={C.teal} strokeDasharray="1 3" />
                    <g shapeRendering="crispEdges">
                      {dayBars.map(({ x, h, c }) => <rect key={x} x={x} y={986 - h} width={1} height={h} fill={c} />)}
                      <rect x="1633" y="909" width="1" height="77" fill={R} />
                      <rect x="1689" y="963" width="1" height="23" fill={G} />
                      <rect x="1728" y="915" width="1" height="71" fill={G} />
                      <rect x="1757" y="938" width="1" height="48" fill={G} />
                      <rect x="1760" y="942" width="1" height="44" fill={G} />
                      <rect x="1809" y="966" width="1" height="20" fill={R} />
                      <rect x="1830" y="966" width="1" height="20" fill={R} />
                      <rect x="1854" y="861" width="1" height="125" fill={G} />
                    </g>
                  </Canvas>
                </IntraCol>
                <IntraTicks>
                  {DAY_TICKS.map((t, i) => <Tag key={t} $c={i < 6 ? G : i === 6 ? W : R}>{t}</Tag>)}
                </IntraTicks>
              </Intraday>
              <TabRow>
                <Tab $pad={6}>&#8202;Trend</Tab>
                <Tab $pad={1}>Chips</Tab>
              </TabRow>
            </Aside>
          </Work>
        </Window>
      </Body>
      <Status>
        <Cell $w={52} $bg="#000" $c="#d8d0a0">西站</Cell>
        <Cell $w={138}>{"HLJCI 0.00  0.00 —"}</Cell>
        <Cell $w={212}>{"HLJCI      —     —    —%    —"}</Cell>
        <Cell />
        <Cell $w={179} />
        <Cell $w={20}>
          <svg width="15" height="17" viewBox="0 0 16 17"><path d="M6 1h9v9H6z" fill="#000" stroke="#909000" /><path d="M0 5h9v9H0z" fill="#00e000" stroke="#909000" /><path d="M2 16h6" stroke="#909000" strokeWidth="2" /><path d="M12 15h4M14 13v4" stroke="#00e000" /></svg>
        </Cell>
        <Clock>15:12:01</Clock>
      </Status>
      <Taskbar>
        <Grow />
        <Dock>
          <DockButton aria-label="Start">
            <svg width="24" height="24" viewBox="0 0 24 24"><defs><linearGradient id="win" x1="0" y1="0" x2="1" y2="1"><stop offset="0" stopColor="#5cc8f8" /><stop offset="1" stopColor="#0070d0" /></linearGradient></defs><path d="M0 0h11.500v11.500H0zM12.500 0H24v11.500H12.500zM0 12.500h11.500V24H0zM12.500 12.500H24V24H12.500z" fill="url(#win)" /></svg>
          </DockButton>
          <SearchBox><SearchIcon size={15} /><input type="text" placeholder="Search" aria-label="Search" /></SearchBox>
          <DockButton $dot aria-label="Chrome">
            <svg width="24" height="24" viewBox="0 0 24 24"><circle cx="12" cy="12" r="12" fill="#2da94f" /><path d="M12 12L1.600 6A12 12 0 0 1 22.400 6z" fill="#e33b2e" /><path d="M12 12L22.400 6A12 12 0 0 1 12 24z" fill="#fcc934" /><circle cx="12" cy="12" r="6" fill="#fff" /><circle cx="12" cy="12" r="4.500" fill="#3b78e7" /></svg>
          </DockButton>
          <DockButton $dot aria-label="Files">
            <svg width="24" height="22" viewBox="0 0 24 22"><path d="M0 2q0-2 2-2h7l2 3h11q2 0 2 2v4H0z" fill="#e8a210" /><path d="M0 6h24v13q0 2-2 2H2q-2 0-2-2z" fill="#fdd462" /><path d="M5 21v-5q0-2 2-2h10q2 0 2 2v5z" fill="#1878c8" /></svg>
          </DockButton>
          <DockButton $dot aria-label="Excel">
            <svg width="24" height="24" viewBox="0 0 24 24"><path d="M12 3h11v18H12z" fill="#fff" stroke="#1e7145" /><path d="M14 6h8M14 9h8M14 12h8M14 15h8M14 18h8" stroke="#1e7145" strokeWidth="1.500" /><path d="M1 3l13-3v24L1 21z" fill="#1e7145" /><text x="7" y="16" textAnchor="middle" fontSize="11" fontWeight="700" fill="#fff">X</text></svg>
          </DockButton>
          <DockButton aria-label="Word">
            <svg width="24" height="24" viewBox="0 0 24 24"><path d="M12 3h11v18H12z" fill="#fff" stroke="#2a5699" /><path d="M14 6h7M14 9h7M14 12h7M14 15h7M14 18h7" stroke="#2a5699" /><path d="M1 3l13-3v24L1 21z" fill="#2a5699" /><text x="7" y="16" textAnchor="middle" fontSize="11" fontWeight="700" fill="#fff">W</text></svg>
          </DockButton>
          <DockButton $dot aria-label="Zalo">
            <svg width="26" height="24" viewBox="0 0 26 24"><rect x="1" y="1" width="23" height="22" rx="9" fill="#fff" stroke="#1768f5" strokeWidth="1.500" /><path d="M3 19q5 4 12 4h-9q-3 0-3-4" fill="#1768f5" /><text x="13" y="16" textAnchor="middle" fontSize="10" fontWeight="700" fill="#1768f5">Zalo</text></svg>
            <Badge>5+</Badge>
          </DockButton>
          <DockButton $dot aria-label="Homily"><Mark s={26} /></DockButton>
          <DockButton $on aria-label="Homily Chart">
            <svg width="24" height="24" viewBox="0 0 24 24"><rect width="24" height="24" rx="4" fill="#120202" /><path d="M5 3l14 1v10l-5 2-9-2z" fill="#c8101c" /><path d="M9 5v6h6V5M8 14l9-2" fill="none" stroke="#ff5048" strokeWidth="1.500" /><circle cx="12" cy="20" r="2" fill="#ff3020" /></svg>
          </DockButton>
        </Dock>
        <Grow>
          <ChevronUp size={16} />
          <Pair>&nbsp;ENG&nbsp;</Pair>
          <Wifi size={17} />
          <Volume2 size={17} />
          <svg width="17" height="12" viewBox="0 0 17 12" fill="none" stroke="#202428" strokeWidth="1.400"><rect x="1" y="1" width="13" height="10" rx="2" /><path d="M16 4v4" /><path d="M3 3h3v6H3z" fill="#202428" stroke="none" /></svg>
          <DateTime>3:12 PM<br />25/10/2022</DateTime>
          <Count>1</Count>
        </Grow>
      </Taskbar>
    </Screen>
  );
}
